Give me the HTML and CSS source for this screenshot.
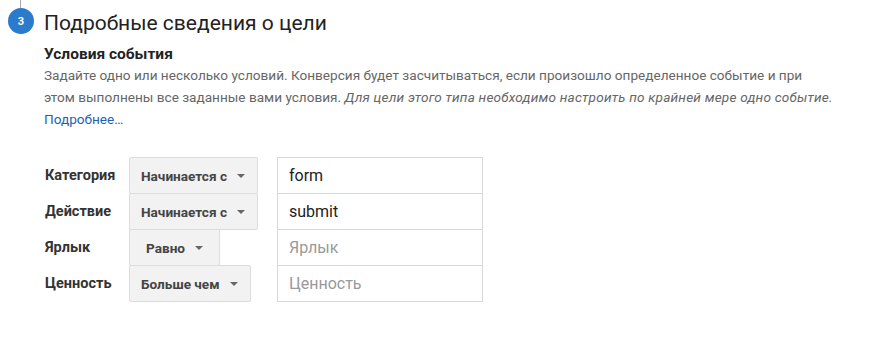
FILE: index.html
```html
<!DOCTYPE html>
<html lang="ru">
<head>
<meta charset="utf-8">
<link rel="stylesheet" href="styles.css">
</head>
<body>
<div class="step">
  <div class="step-marker">
    <div class="step-line"></div>
    <div class="step-num">3</div>
  </div>
  <div class="step-body">
    <h1 class="step-title">Подробные сведения о цели</h1>
    <h2 class="section-title">Условия события</h2>
    <p class="desc">Задайте одно или несколько условий. Конверсия будет засчитываться, если произошло определенное событие и при<br>этом выполнены все заданные вами условия. <em>Для цели этого типа необходимо настроить по крайней мере одно событие.</em></p>
    <a class="more" href="#">Подробнее…</a>

    <div class="conditions">
      <div class="row">
        <div class="label">Категория</div>
        <div class="op-cell"><button class="op">Начинается с <span class="caret"></span></button></div>
        <div class="field"><span class="val">form</span></div>
      </div>
      <div class="row">
        <div class="label">Действие</div>
        <div class="op-cell"><button class="op">Начинается с <span class="caret"></span></button></div>
        <div class="field"><span class="val">submit</span></div>
      </div>
      <div class="row">
        <div class="label">Ярлык</div>
        <div class="op-cell"><button class="op op-short">Равно <span class="caret"></span></button></div>
        <div class="field"><span class="ph">Ярлык</span></div>
      </div>
      <div class="row">
        <div class="label">Ценность</div>
        <div class="op-cell"><button class="op">Больше чем <span class="caret"></span></button></div>
        <div class="field"><span class="ph">Ценность</span></div>
      </div>
    </div>
  </div>
</div>
</body>
</html>
```

FILE: styles.css
```css
html, body {
  margin: 0;
  padding: 0;
  background: #fff;
}
body {
  font-family: Roboto, "Noto Sans", Arial, sans-serif;
  color: #222;
}
.step {
  display: flex;
}
.step-marker {
  width: 44px;
  flex: none;
  display: flex;
  flex-direction: column;
  align-items: flex-start;
}
.step-line {
  width: 1px;
  height: 8px;
  margin-left: 20px;
  background: #a8a8a8;
}
.step-num {
  width: 26px;
  height: 26px;
  margin-left: 8px;
  border-radius: 50%;
  background: #2a7bcc;
  color: #fff;
  font-size: 11px;
  font-weight: 700;
  display: flex;
  align-items: center;
  justify-content: center;
}
.step-body {
  flex: 1;
}
.step-title {
  margin: 10px 0 0;
  font-size: 21px;
  font-weight: 400;
  line-height: 26px;
  color: #222;
}
.section-title {
  margin: 9px 0 0;
  font-size: 15.5px;
  font-weight: 700;
  line-height: 18px;
  color: #222;
}
.desc {
  margin: 1px 0 0;
  width: 825px;
  font-size: 13.6px;
  line-height: 22px;
  color: #666;
}
.desc em {
  font-style: italic;
  letter-spacing: 0.2px;
}
.more {
  display: block;
  font-size: 13.6px;
  line-height: 22px;
  color: #1a62b8;
  text-decoration: none;
}
.conditions {
  margin-top: 27px;
  display: flex;
  flex-direction: column;
}
.row {
  display: flex;
  height: 37px;
  align-items: flex-start;
}
.row + .row {
  margin-top: -1px;
}
.label {
  width: 84px;
  padding-left: 1px;
  flex: none;
  line-height: 37px;
  font-size: 14.5px;
  font-weight: 700;
  color: #333;
}
.op-cell {
  width: 148px;
  flex: none;
}
.op {
  box-sizing: border-box;
  height: 37px;
  margin: 0;
  padding: 0 12px 0 11px;
  border: 1px solid #dcdcdc;
  border-radius: 2px;
  background: #f2f2f2;
  font-family: inherit;
  font-size: 13.6px;
  font-weight: 700;
  color: #444;
  display: inline-flex;
  align-items: center;
  gap: 8px;
}
.op-short {
  padding: 0 16px;
}
.caret {
  display: inline-block;
  width: 0;
  height: 0;
  border-left: 4px solid transparent;
  border-right: 4px solid transparent;
  border-top: 4px solid #666;
  margin-left: 2px;
}
.field {
  box-sizing: border-box;
  width: 206px;
  height: 37px;
  border: 1px solid #d9d9d9;
  padding: 0 11px;
  display: flex;
  align-items: center;
  font-size: 16px;
}
.val {
  color: #222;
}
.ph {
  color: #999;
}
```
